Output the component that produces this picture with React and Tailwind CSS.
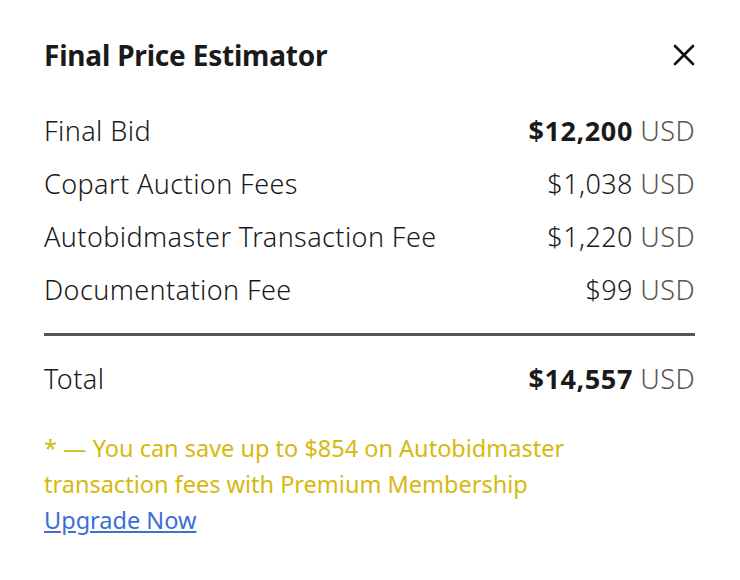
export default function App() {
  const rows = [
    ["Final Bid", "$12,200", true],
    ["Copart Auction Fees", "$1,038", false],
    ["Autobidmaster Transaction Fee", "$1,220", false],
    ["Documentation Fee", "$99", false],
  ];
  return (
    <div className="w-[740px] h-[580px] bg-white pl-[44px] pr-[45px] pt-[30px] text-[#1a1a1a]" style={{ fontFamily: '"Noto Sans", "Open Sans", sans-serif' }}>
      <div className="flex items-center justify-between h-[50px]">
        <h2 className="text-[28px] font-bold tracking-[-0.2px]">Final Price Estimator</h2>
        <svg width="24" height="24" viewBox="0 0 24 24" className="mr-[-1px]">
          <path d="M3 3 L21 21 M21 3 L3 21" stroke="#111" strokeWidth="2.6" strokeLinecap="round" />
        </svg>
      </div>
      <div className="mt-[24.5px] flex flex-col">
        {rows.map(([l, v, b]) => (
          <div key={l} className="flex items-center justify-between h-[53px] text-[27px] font-light tracking-[0.4px]">
            <span>{l}</span>
            <span>
              <span className={b ? "font-bold tracking-[0.6px]" : ""}>{v}</span>{" "}
              <span className="text-[#555]">USD</span>
            </span>
          </div>
        ))}
      </div>
      <div className="mt-[16px] h-[3px] bg-[#555]" />
      <div className="mt-[17px] flex items-center justify-between h-[53px] text-[27px] font-light tracking-[0.4px]">
        <span>Total</span>
        <span>
          <span className="font-bold tracking-[0.6px]">$14,557</span>{" "}
          <span className="text-[#555]">USD</span>
        </span>
      </div>
      <div className="mt-[24px] text-[23.5px] leading-[36px] max-w-[560px]">
        <p className="text-[#d6b90f]">* — You can save up to $854 on Autobidmaster transaction fees with Premium Membership</p>
        <a href="#" className="text-[#3b6fd6] underline">Upgrade Now</a>
      </div>
    </div>
  );
}
